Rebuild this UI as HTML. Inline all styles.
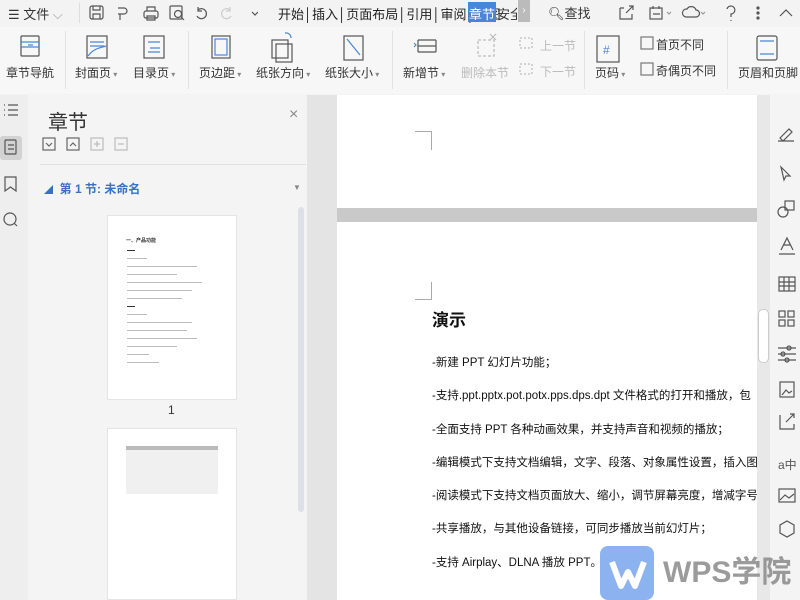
<!DOCTYPE html>
<html style="width:800px;height:600px;overflow:hidden"><head><meta charset="utf-8"><style>
*{margin:0;padding:0;box-sizing:border-box}
body{width:800px;height:600px;overflow:hidden;background:#f3f3f3;font-family:"Liberation Sans","Noto Sans CJK SC",sans-serif;position:relative;color:#333}
.a{position:absolute}
.t{font-size:12px;white-space:nowrap}
svg{position:absolute;fill:none;stroke:#555;stroke-width:1.2}
.ln{height:1px;background:#bbb;margin-bottom:7px}
</style></head><body>
<div class="a" style="left:0;top:0;width:800px;height:26px;background:#f3f3f3"></div>
<div class="a t" style="left:8px;top:4px;font-size:13px">☰ 文件 <span style="color:#999">⌵</span></div>
<div class="a" style="left:79px;top:3px;width:1px;height:20px;background:#ddd"></div>
<svg style="left:88px;top:4px" width="170" height="18"><rect x="2" y="2" width="13" height="13" rx="2"/><path d="M5 2v4h7V2M5 15v-5h7v5"/><path d="M30 4h6a3 3 0 0 1 0 6h-4v6M30 10h2"/><rect x="56" y="7" width="14" height="7" rx="2"/><path d="M59 7V3h8v4M59 12h8v4h-8z"/><rect x="82" y="2" width="12" height="13" rx="1"/><circle cx="90" cy="10" r="3.5"/><path d="M93 13l3 3"/><path d="M110 6a5 5 0 1 1 -1 6M110 3v4h4"/><path d="M142 6a5 5 0 1 0 1 6M142 3v4h-4" stroke="#ccc"/><path d="M164 8l3 3 3-3"/></svg>
<div class="a t" style="left:278px;top:4px;font-size:13px;color:#222">开始│插入│页面布局│引用│审阅│视图</div>
<div class="a t" style="left:468px;top:2px;width:28px;height:20px;background:#4a86d8;color:#fff;font-size:13px;padding:2px 1px">章节</div>
<div class="a t" style="left:497px;top:4px;font-size:13px;width:20px;overflow:hidden">安全</div>
<div class="a" style="left:518px;top:0;width:12px;height:22px;background:#bbb;color:#fff;font-size:10px;text-align:center;line-height:22px">›</div>
<div class="a t" style="left:548px;top:3px;font-size:13px">🔍︎查找</div>
<svg style="left:617px;top:3px" width="180" height="20"><path d="M3 5h4M3 5v11h12v-5M9 10l7-7M12 3h4v4"/><rect x="33" y="5" width="12" height="11"/><path d="M36 3v3M42 3v3M36 11h7"/><path d="M50 9l2 2 2-2" stroke="#999"/><path d="M69 14a4 4 0 0 1 1-8 5 5 0 0 1 9 1 3 3 0 0 1 0 7z"/><path d="M84 9l2 2 2-2" stroke="#999"/><path d="M110 6a4 4 0 1 1 4 5v3M114 17v1"/><circle cx="141" cy="5" r="1" fill="#555"/><circle cx="141" cy="10" r="1" fill="#555"/><circle cx="141" cy="15" r="1" fill="#555"/><path d="M163 13l6-6 6 6"/></svg>
<div class="a" style="left:0;top:27px;width:800px;height:67px;background:#f7f7f7"></div>
<svg style="left:0;top:30px" width="800" height="50"><g><rect x="21" y="6" width="18" height="20" rx="1"/><path d="M21 12h18M21 17h18M28 15h5" stroke="#4a86d8"/></g>
<g><rect x="87" y="6" width="20" height="22"/><path d="M90 12h14M90 16h14M88 26c6-8 12-8 18-10" stroke="#4a86d8"/></g>
<g><rect x="144" y="6" width="20" height="22"/><path d="M148 12h12M150 18h10M148 22h12" stroke="#4a86d8"/></g>
<g><rect x="212" y="6" width="18" height="22"/><rect x="215" y="9" width="12" height="16" stroke="#4a86d8"/></g>
<g><rect x="272" y="10" width="16" height="18"/><rect x="276" y="14" width="16" height="18"/><path d="M285 3a5 5 0 0 1 6 5" stroke="#4a86d8"/></g>
<g><rect x="344" y="6" width="19" height="24"/><path d="M347 9l13 16" stroke="#4a86d8"/></g>
<g><path d="M418 10h18M418 16h18M418 22h18M418 10v12M436 10v12" /><path d="M414 13l2 2-2 2" stroke="#4a86d8"/></g>
<g stroke="#bbb"><rect x="478" y="10" width="16" height="16" stroke-dasharray="3 2"/><path d="M490 4l6 6M496 4l-6 6"/></g>
<g stroke="#bbb"><rect x="520" y="8" width="12" height="10" stroke-dasharray="2 2"/><rect x="520" y="34" width="12" height="10" stroke-dasharray="2 2"/></g>
<g><rect x="597" y="6" width="22" height="26"/><text x="603" y="24" font-size="12" fill="#4a86d8" stroke="none">#</text></g>
<g><rect x="641" y="7" width="12" height="12" stroke="#777"/><rect x="641" y="33" width="12" height="12" stroke="#777"/></g>
<g><rect x="757" y="6" width="20" height="24" rx="2"/><path d="M760 11h14M760 24h14" stroke="#4a86d8"/></g></svg>
<div class="a t" style="left:6px;top:64px">章节导航</div>
<div class="a t" style="left:75px;top:64px">封面页<span style="font-size:8px;color:#888"> ▾</span></div>
<div class="a t" style="left:133px;top:64px">目录页<span style="font-size:8px;color:#888"> ▾</span></div>
<div class="a" style="left:65px;top:31px;width:1px;height:58px;background:#e2e2e2"></div>
<div class="a" style="left:188px;top:31px;width:1px;height:58px;background:#e2e2e2"></div>
<div class="a t" style="left:199px;top:64px">页边距<span style="font-size:8px;color:#888"> ▾</span></div>
<div class="a t" style="left:256px;top:64px">纸张方向<span style="font-size:8px;color:#888"> ▾</span></div>
<div class="a t" style="left:325px;top:64px">纸张大小<span style="font-size:8px;color:#888"> ▾</span></div>
<div class="a" style="left:392px;top:31px;width:1px;height:58px;background:#e2e2e2"></div>
<div class="a t" style="left:403px;top:64px">新增节<span style="font-size:8px;color:#888"> ▾</span></div>
<div class="a t" style="left:461px;top:64px;color:#bbb">删除本节</div>
<div class="a t" style="left:540px;top:37px;color:#bbb">上一节</div>
<div class="a t" style="left:540px;top:63px;color:#bbb">下一节</div>
<div class="a" style="left:584px;top:31px;width:1px;height:58px;background:#e2e2e2"></div>
<div class="a t" style="left:595px;top:64px">页码<span style="font-size:8px;color:#888"> ▾</span></div>
<div class="a t" style="left:656px;top:36px">首页不同</div>
<div class="a t" style="left:656px;top:62px">奇偶页不同</div>
<div class="a" style="left:727px;top:31px;width:1px;height:58px;background:#e2e2e2"></div>
<div class="a t" style="left:738px;top:64px;width:62px;overflow:hidden">页眉和页脚</div>
<div class="a" style="left:0;top:95px;width:28px;height:505px;background:#eeeeee"></div>
<div class="a" style="left:0;top:136px;width:22px;height:24px;background:#d2d2d2;border-radius:3px"></div>
<svg style="left:0;top:100px" width="28" height="130"><path d="M4 5h1M8 5h10M4 10h1M8 10h10M4 15h1M8 15h10"/><rect x="5" y="40" width="11" height="14" rx="1"/><path d="M8 45h6M8 49h6"/><path d="M5 77h11v14l-5.5-4-5.5 4z"/><circle cx="10" cy="119" r="6"/><path d="M14 123l3 3"/></svg>
<div class="a" style="left:28px;top:95px;width:279px;height:505px;background:#f4f4f4"></div>
<div class="a" style="left:48px;top:106px;font-size:20px;color:#333">章节</div>
<div class="a" style="left:289px;top:106px;font-size:16px;color:#888">×</div>
<svg style="left:40px;top:137px" width="100" height="16"><rect x="3" y="1" width="12" height="12" stroke="#666"/><path d="M6 6l3 3 3-3" stroke="#666"/><rect x="27" y="1" width="12" height="12" stroke="#666"/><path d="M30 9l3-3 3 3" stroke="#666"/><rect x="51" y="1" width="12" height="12" stroke="#bbb"/><path d="M54 7h6M57 4v6" stroke="#bbb"/><rect x="75" y="1" width="12" height="12" stroke="#bbb"/><path d="M78 7h6" stroke="#bbb"/></svg>
<div class="a" style="left:40px;top:164px;width:266px;height:1px;background:#e0e0e0"></div>
<div class="a t" style="left:44px;top:180px;color:#3a6fc4;font-weight:bold;font-size:12px"><span style="font-size:9px">◢</span>&nbsp; 第 1 节: 未命名</div>
<div class="a" style="left:293px;top:183px;font-size:8px;color:#888">▼</div>
<div class="a" style="left:298px;top:207px;width:6px;height:305px;background:#dde0e6;border-radius:3px"></div>
<div class="a" style="left:107px;top:215px;width:130px;height:185px;background:#fff;border:1px solid #e4e4e4"></div>
<div class="a" style="left:126px;top:237px;font-size:5px;color:#333;font-weight:bold">一、产品功能</div>
<div class="a" style="left:127px;top:250px;width:80px">
<div class="ln" style="width:8px;background:#333"></div><div class="ln" style="width:20px"></div><div class="ln" style="width:70px"></div><div class="ln" style="width:50px"></div><div class="ln" style="width:75px"></div><div class="ln" style="width:65px"></div><div class="ln" style="width:55px"></div><div class="ln" style="width:8px;background:#333"></div><div class="ln" style="width:20px"></div><div class="ln" style="width:65px"></div><div class="ln" style="width:60px"></div><div class="ln" style="width:70px"></div><div class="ln" style="width:50px"></div><div class="ln" style="width:22px"></div><div class="ln" style="width:32px"></div></div>
<div class="a" style="left:168px;top:403px;font-size:12px">1</div>
<div class="a" style="left:107px;top:428px;width:130px;height:172px;background:#fff;border:1px solid #e4e4e4"></div>
<div class="a" style="left:126px;top:446px;width:92px;height:48px;background:#f0f0f0;border-top:4px solid #bbb"></div>
<div class="a" style="left:307px;top:95px;width:30px;height:505px;background:#e4e4e4"></div>
<div class="a" style="left:337px;top:95px;width:420px;height:113px;background:#fff"></div>
<div class="a" style="left:337px;top:208px;width:420px;height:14px;background:#c9c9c9"></div>
<div class="a" style="left:337px;top:222px;width:420px;height:378px;background:#fff"></div>
<div class="a" style="left:415px;top:131px;width:17px;height:19px;border-top:1px solid #aaa;border-right:1px solid #aaa"></div>
<div class="a" style="left:415px;top:282px;width:17px;height:18px;border-bottom:1px solid #aaa;border-right:1px solid #aaa"></div>
<div class="a" style="left:432px;top:306px;font-size:17px;font-weight:bold;color:#111">演示</div>
<div class="a" style="left:432px;top:347px;font-size:11.5px;line-height:33.3px;color:#111;width:325px;overflow:hidden;white-space:nowrap">-新建 PPT 幻灯片功能；<br>-支持.ppt.pptx.pot.potx.pps.dps.dpt 文件格式的打开和播放，包<br>-全面支持 PPT 各种动画效果，并支持声音和视频的播放；<br>-编辑模式下支持文档编辑，文字、段落、对象属性设置，插入图片<br>-阅读模式下支持文档页面放大、缩小，调节屏幕亮度，增减字号等<br>-共享播放，与其他设备链接，可同步播放当前幻灯片；<br>-支持 Airplay、DLNA 播放 PPT。</div>
<div class="a" style="left:757px;top:95px;width:13px;height:505px;background:#e8e8e8"></div>
<div class="a" style="left:758px;top:309px;width:11px;height:54px;background:#fff;border:1px solid #ccc;border-radius:5px"></div>
<div class="a" style="left:770px;top:95px;width:30px;height:505px;background:#f4f4f4"></div>
<svg style="left:775px;top:125px" width="24" height="420"><path d="M3 16h16M5 13l9-9 3 3-9 9z"/><path d="M6 42l9 9-4 0-2 4z"/><circle cx="8" cy="87" r="5"/><rect x="10" y="76" width="9" height="9"/><path d="M6 125l6-12 6 12M4 129h16M8 120h8"/><rect x="4" y="152" width="16" height="14"/><path d="M4 157h16M4 161h16M9 152v14M14 152v14"/><rect x="4" y="186" width="6" height="6"/><rect x="13" y="186" width="6" height="6"/><rect x="4" y="195" width="6" height="6"/><rect x="13" y="195" width="6" height="6"/><path d="M3 223h18M3 229h18M3 235h18"/><circle cx="14" cy="223" r="2"/><circle cx="8" cy="229" r="2"/><circle cx="12" cy="235" r="2"/><rect x="5" y="257" width="14" height="15"/><path d="M7 270l4-5 3 3 3-2"/><path d="M5 290v14h14v-5M11 297l8-8M15 289h4v4"/><text x="3" y="344" font-size="12" fill="#555" stroke="none">a中</text><rect x="4" y="364" width="16" height="13"/><path d="M5 375l5-5 4 3 5-4"/><path d="M12 396l7 4v8l-7 4-7-4v-8z"/></svg>
<div class="a" style="left:600px;top:546px;width:54px;height:54px;background:#8cb3f0;border-radius:8px"></div>
<svg style="left:608px;top:556px" width="40" height="36"><path d="M4 6l9 24 7-14 7 14 9-24" stroke="#fff" stroke-width="6" stroke-linejoin="round"/></svg>
<div class="a" style="left:663px;top:553px;font-size:30px;line-height:40px;font-weight:bold;color:#8a8a8a;opacity:.85;white-space:nowrap">WPS学院</div>
</body></html>
